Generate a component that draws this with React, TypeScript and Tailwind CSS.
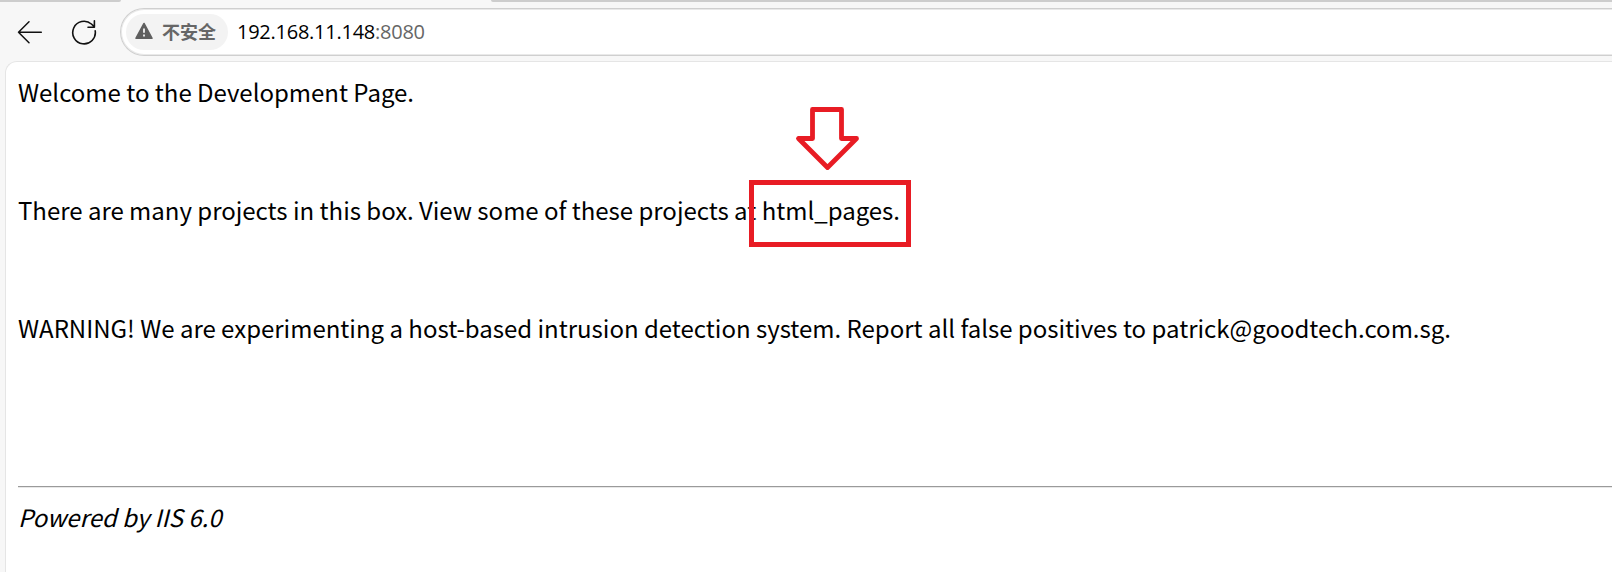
function BackIcon() {
  return (
    <svg className="shrink-0" width="26" height="26" viewBox="0 0 26 26" fill="none" stroke="#111" strokeWidth="1.5" strokeLinecap="round" strokeLinejoin="round">
      <path d="M24.3 13.3H1.5M12 2.8L1.5 13.3L12 23.8" />
    </svg>
  );
}

function ReloadIcon() {
  return (
    <svg className="ml-[28px] shrink-0" width="26" height="26" viewBox="0 0 26 26" fill="none" stroke="#111" strokeWidth="1.6" strokeLinecap="round" strokeLinejoin="round">
      <path d="M24.2 11.8A11.3 11.3 0 1 1 20.4 5L23.2 7.6M23.4 1.8V8.2H17" />
    </svg>
  );
}

function WarningIcon() {
  return (
    <svg className="-mt-[2px] shrink-0" width="18" height="18" viewBox="0 0 18 18">
      <path d="M9 1.6L16.8 16.2H1.2Z" fill="#5f5f5f" stroke="#5f5f5f" strokeWidth="1.8" strokeLinejoin="round" />
      <path d="M9 6.5V10.8M9 12.6V14.4" stroke="#f3f3f3" strokeWidth="1.8" />
    </svg>
  );
}

export default function App() {
  return (
    <div className="h-[572px] w-full overflow-hidden bg-[#f7f7f7] font-['Noto_Sans_CJK_SC',sans-serif] text-black">
      <div className="flex h-[3px] w-full">
        <div className="h-[2px] w-[121px] rounded-br bg-[#cdcdcd]" />
        <div className="w-[370px]" />
        <div className="h-[2px] flex-1 rounded-bl bg-[#cdcdcd]" />
      </div>
      <div className="flex h-[58px] items-center pl-[17px]">
        <BackIcon />
        <ReloadIcon />
        <div className="-mr-1 ml-[23px] flex h-[48px] flex-1 items-center rounded-l-full border border-r-0 border-[#cfcfcf] bg-white pl-[5px] shadow-[inset_0_0_0_1px_#e9e9e9]">
          <div className="flex h-[36px] w-[102px] items-center rounded-full bg-[#f3f3f3] pl-[9px]">
            <WarningIcon />
            <span className="-mt-[2px] ml-[9px] text-[18px] leading-[36px] font-bold text-[#666]">不安全</span>
          </div>
          <div className="ml-[9px] font-['Open_Sans',sans-serif] text-[20px] tracking-[-0.25px] text-black">
            192.168.11.148<span className="text-[#666]">:8080</span>
          </div>
        </div>
      </div>
      <div className="ml-[5px] h-[520px] rounded-tl-[12px] border border-r-0 border-[#e5e5e5] bg-white pt-[12px] pl-[12px] text-[24px] leading-[36px] tracking-[-0.01px] whitespace-nowrap">
        <p>Welcome to the Development Page.</p>
        <p className="mt-[82px]">
          There are many projects in this box. View some of these projects at{" "}
          <span className="relative">
            html_pages.
            <span className="absolute top-[-12px] left-[-13px] h-[67px] w-[162px] border-[5px] border-[#e81c24]" />
            <svg className="absolute top-[-87px] left-[32px]" width="68" height="68" viewBox="794 105 68 68" fill="none" stroke="#e81c24" strokeWidth="4.8" strokeLinejoin="round">
              <path d="M812.5 109.5H841.5V138.5H856.5L827.5 167.5L798.5 138.5H812.5Z" />
            </svg>
          </span>
        </p>
        <p className="mt-[82px]">
          WARNING! We are experimenting a host-based intrusion detection system. Report all false positives to patrick@goodtech.com.sg.
        </p>
        <div className="mt-[140px] h-[2px] border-t border-b border-t-[#9a9a9a] border-b-[#e8e8e8]" />
        <p className="mt-[11px] italic">Powered by IIS 6.0</p>
      </div>
    </div>
  );
}
